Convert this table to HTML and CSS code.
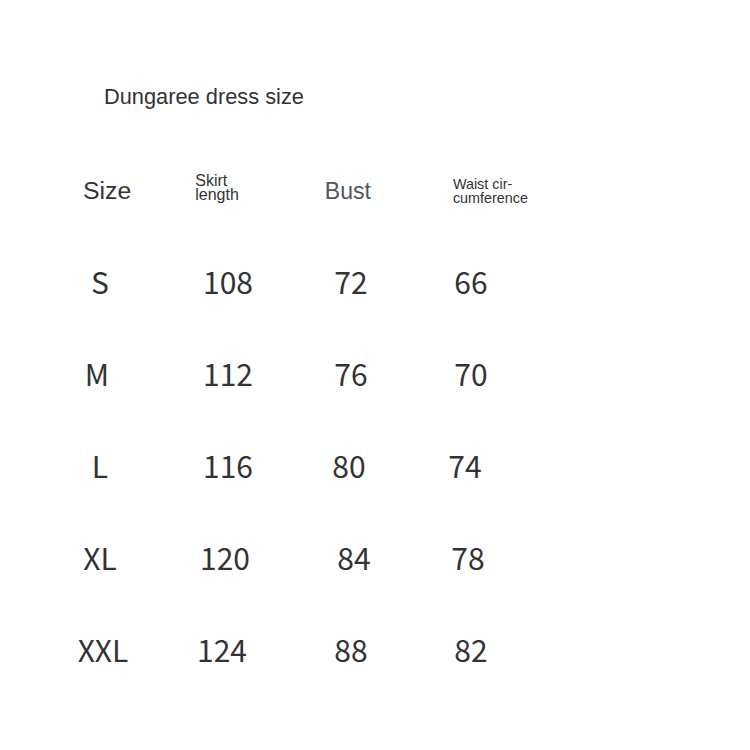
FILE: index.html
```html
<!DOCTYPE html>
<html>
<head>
<meta charset="utf-8">
<link rel="stylesheet" href="styles.css">
</head>
<body>
<div class="page">
  <h1 class="title">Dungaree dress size</h1>
  <div class="head">
    <div class="h h-size">Size</div>
    <div class="h h-skirt">Skirt<br>length</div>
    <div class="h h-bust">Bust</div>
    <div class="h h-waist">Waist cir-<br>cumference</div>
  </div>
  <div class="table">
    <div class="c">S</div><div class="c">108</div><div class="c">72</div><div class="c">66</div>
    <div class="c n-l3">M</div><div class="c">112</div><div class="c">76</div><div class="c">70</div>
    <div class="c">L</div><div class="c">116</div><div class="c n-l2">80</div><div class="c n-l6">74</div>
    <div class="c">XL</div><div class="c n-l3">120</div><div class="c n-r3">84</div><div class="c n-l3">78</div>
    <div class="c n-r3">XXL</div><div class="c n-l6">124</div><div class="c">88</div><div class="c">82</div>
  </div>
</div>
</body>
</html>
```
FILE: styles.css
```css
html, body {
  margin: 0;
  padding: 0;
  background: #ffffff;
}
.page {
  width: 750px;
  height: 750px;
  padding-top: 84px;
  box-sizing: border-box;
}
.title {
  margin: 0 0 0 104px;
  font-family: "Liberation Sans", Arial, sans-serif;
  font-weight: normal;
  font-size: 21.8px;
  line-height: 26px;
  color: #333333;
}
.head {
  margin-top: 52.5px;
  height: 40px;
  display: flex;
  align-items: flex-end;
  font-family: "Liberation Sans", Arial, sans-serif;
  color: #333333;
}
.h-size {
  margin-left: 83px;
  font-size: 24.8px;
  line-height: 24px;
}
.h-skirt {
  margin-left: 64px;
  font-size: 16px;
  line-height: 14px;
  margin-bottom: 0.5px;
}
.h-bust {
  margin-left: 86px;
  font-size: 23px;
  line-height: 24px;
  color: #52565c;
}
.h-waist {
  margin-left: 82px;
  font-size: 14.4px;
  line-height: 14.5px;
  margin-bottom: -3px;
}
.table {
  margin-top: 32.5px;
  margin-left: 40px;
  display: grid;
  grid-template-columns: 120px 136px 110px 130px;
  grid-auto-rows: 92px;
  font-family: "Noto Sans CJK SC", "Noto Sans", sans-serif;
  font-size: 30px;
  line-height: 92px;
  color: #333333;
}
.c {
  text-align: center;
}
.n-l2 { padding-right: 4px; }
.n-l3 { padding-right: 6px; }
.n-l6 { padding-right: 12px; }
.n-r3 { padding-left: 6px; }
```
